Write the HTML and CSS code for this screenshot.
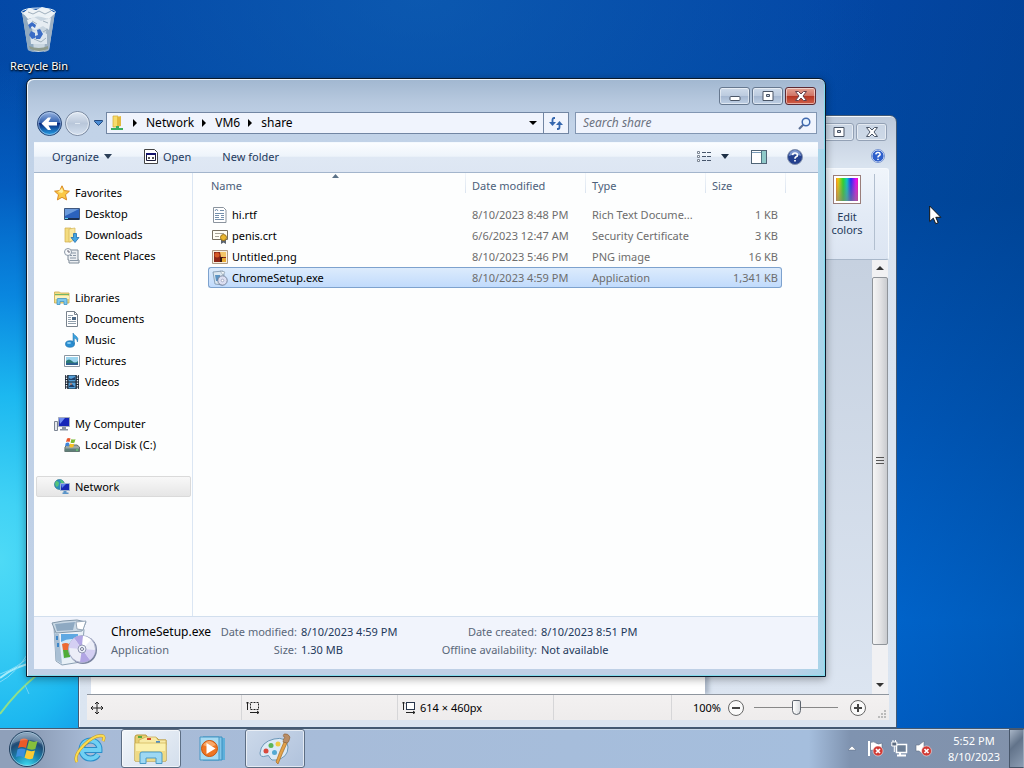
FILE: index.html
```html
<!DOCTYPE html>
<html lang="en">
<head>
    <meta charset="UTF-8">
    <meta name="viewport" content="width=device-width, initial-scale=1.0">
    <title>Desktop</title>
    <link rel="stylesheet" href="styles.css">
</head>
<body>
<main class="desktop">
    <svg class="wallpaper-lines" viewBox="0 0 80 120" aria-hidden="true">
        <path d="M0 106Q16 84 38 66" stroke="#8fe08a" stroke-width="2"/>
        <path d="M0 70Q14 58 40 53" stroke="#a5ecfb" stroke-width="2"/>
        <path d="M0 74Q16 66 30 42M0 66Q18 60 32 46" stroke="#7fdcf8"/>
        <path d="M25 77L29 86" stroke="#6fd4fa"/>
    </svg>

    <a href="#" class="desktop-icon">
        <svg width="40" height="48" viewBox="0 0 40 48" aria-hidden="true">
            <path d="M3 6L9 44Q19 48 30 44L36 6Z" fill="#c9d6e0"/>
            <path d="M3 6L9 44Q12 46 15 46L12 8Z" fill="#8fa9c0"/>
            <path d="M36 6L30 44Q27 46 25 46L29 8Z" fill="#9eb1c4"/>
            <path d="M4 7L10 2L17 4L23 1L30 3L36 7L30 13L19 10L9 13Z" fill="#eef3f6"/>
            <path d="M8 14L15 11L22 15L32 12L30 24L24 20L16 24L10 21Z" fill="#e6edf2"/>
            <path d="M11 27L18 24L28 28L28 38L12 38Z" fill="#dde6ee"/>
            <path d="M10 40Q20 44 29 40L29 43Q20 47 11 43Z" fill="#8e9a8c"/>
            <path d="M9 6L14 8L20 5L26 8L32 5M13 15L18 18M24 26L29 23M24 15L29 17M15 33L22 36L27 32" stroke="#9fb0bd" fill="none"/>
            <path d="M9 19l4-3 4 3-1 3-3-2-2 3zM18 24l3-1 3 5-3 5h-4l-1-3 3-1zM12 25l4 2 0 5-3 1-3-4z" fill="#3a6cc6"/>
            <ellipse cx="19.500" cy="6" rx="17" ry="4" fill="none" stroke="#e8f2f8" stroke-width="1"/>
        </svg>
        <span>Recycle Bin</span>
    </a>

    <section class="window paint">
        <div class="titlebar">
            <div class="window-buttons">
                <button aria-label="Minimize"><svg width="14" height="10"><rect x="1" y="5" width="12" height="4" rx="1" fill="#fff" stroke="#4a5566"/></svg></button>
                <button aria-label="Maximize"><svg width="14" height="10" viewBox="0 0 14 10"><path d="M2 .5h10v9H2z" fill="#fff" stroke="#4a5566"/><path d="M5.500 3.500h3v2h-3z" fill="#c8d3e2" stroke="#4a5566"/></svg></button>
                <button aria-label="Close"><svg width="14" height="10" viewBox="0 0 14 10"><path d="M1.500.5h3L7 3 9.500.5h3L9 5l3.500 4.500h-3L7 7 4.500 9.500h-3L5 5z" fill="#fff" stroke="#4a5566"/></svg></button>
            </div>
        </div>
        <div class="ribbon-tabs">
            <button class="icon-button" aria-label="Paint help">
                <svg width="14" height="14" viewBox="0 0 16 16"><circle cx="8" cy="8" r="7" fill="#2e5fcb" stroke="#fff"/><circle cx="8" cy="8" r="7.500" fill="none" stroke="#6f8fd0"/><path d="M5.500 6.200Q5.700 4 8 4t2.500 2Q10.500 7.300 8.800 8 8 8.500 8 9.700M8 11v1.600" fill="none" stroke="#fff" stroke-width="1.700"/></svg>
            </button>
        </div>
        <div class="ribbon">
            <button class="edit-colors">
                <span class="rainbow"></span>
                Edit<br>colors
            </button>
        </div>
        <div class="workspace">
            <div class="canvas-area"><div class="canvas"></div></div>
            <div class="scrollbar">
                <button aria-label="Scroll up"><svg width="8" height="5"><path d="M4 0L8 4H0Z" fill="#333"/></svg></button>
                <div class="track"><div class="thumb"><svg width="8" height="8"><path d="M0 .5h8M0 3.500h8M0 6.500h8" stroke="#555"/></svg></div></div>
                <button aria-label="Scroll down"><svg width="8" height="5"><path d="M0 0H8L4 4Z" fill="#333"/></svg></button>
            </div>
        </div>
        <footer class="paint-status">
            <div class="cell"><svg width="12" height="12" viewBox="0 0 12 12"><path d="M6 0v12M0 6h12M4 2l2-2 2 2M4 10l2 2 2-2M2 4L0 6l2 2M10 4l2 2-2 2" fill="none" stroke="#222"/></svg></div>
            <div class="cell"><svg width="14" height="13" viewBox="0 0 14 13"><rect x="4.500" y="1.500" width="8" height="7" fill="none" stroke="#222" stroke-dasharray="2 1"/><path d="M1.500 9V1M0 2.500L1.500 1 3 2.500M4 11.500h9M11 10l2 1.500-2 1.500" fill="none" stroke="#222"/></svg></div>
            <div class="cell"><svg width="14" height="13" viewBox="0 0 14 13"><rect x="4.500" y="1.500" width="8" height="7" fill="#fff" stroke="#29364c"/><path d="M1.500 9V1M0 2.500L1.500 1 3 2.500M4 11.500h9M11 10l2 1.500-2 1.500" fill="none" stroke="#222"/></svg>614 × 460px</div>
            <div class="cell"></div>
            <div class="zoom">
                <label for="zoom">100%</label>
                <button class="icon-button" aria-label="Zoom out"><svg width="16" height="16"><circle cx="8" cy="8" r="7.500" fill="#fafafa" stroke="#666"/><path d="M4 8h8" stroke="#444" stroke-width="2"/></svg></button>
                <input type="range" id="zoom" min="0" max="100" value="50">
                <button class="icon-button" aria-label="Zoom in"><svg width="16" height="16"><circle cx="8" cy="8" r="7.500" fill="#fafafa" stroke="#666"/><path d="M4 8h8M8 4v8" stroke="#444" stroke-width="2"/></svg></button>
                <svg class="grip" width="8" height="8"><path d="M6 0h2v2H6zM3 3h2v2H3zM6 3h2v2H6zM0 6h2v2H0zM3 6h2v2H3zM6 6h2v2H6z" fill="#bbb"/></svg>
            </div>
        </footer>
    </section>

    <section class="window explorer">
        <div class="titlebar">
            <div class="window-buttons">
                <button aria-label="Minimize"><svg width="14" height="10"><rect x="2" y="5.500" width="10" height="4" rx="1" fill="#fff" stroke="#4a5566"/></svg></button>
                <button aria-label="Maximize"><svg width="14" height="10" viewBox="0 0 14 10"><path d="M2 .5h10v9H2z" fill="#fff" stroke="#4a5566"/><path d="M5.500 3.500h3v2h-3z" fill="#c8d3e2" stroke="#4a5566"/></svg></button>
                <button class="close" aria-label="Close"><svg width="14" height="10" viewBox="0 0 14 10"><path d="M1.500.5h3L7 3 9.500.5h3L9 5l3.500 4.500h-3L7 7 4.500 9.500h-3L5 5z" fill="#fff" stroke="#66404a"/></svg></button>
            </div>
        </div>

        <div class="navbar">
            <button class="icon-button" aria-label="Back">
                <svg width="27" height="27" viewBox="0 0 27 27">
                    <defs><linearGradient id="back" x2="0" y2="1"><stop offset="0" stop-color="#9db8e4"/><stop offset=".48" stop-color="#2f5fae"/><stop offset=".5" stop-color="#08297e"/><stop offset="1" stop-color="#27a5ea"/></linearGradient></defs>
                    <circle cx="13.500" cy="13.500" r="12" fill="url(#back)" stroke="#2b4775"/><circle cx="13.500" cy="13.500" r="11" fill="none" stroke="#bcd5f2" stroke-opacity=".6"/>
                    <path d="M5.500 13.500L12 7.500h3L12.500 12H21v3.500h-8.500L15 20h-3z" fill="#fff"/>
                </svg>
            </button>
            <button class="icon-button forward" aria-label="Forward">
                <svg width="27" height="27" viewBox="0 0 27 27">
                    <defs><linearGradient id="fwd" x2="0" y2="1"><stop offset="0" stop-color="#e2eaf4"/><stop offset=".5" stop-color="#b9c7da"/><stop offset="1" stop-color="#d5e1f0"/></linearGradient></defs>
                    <circle cx="13.500" cy="13.500" r="12" fill="url(#fwd)" stroke="#76869e"/><circle cx="13.500" cy="13.500" r="11" fill="none" stroke="#f4f8fc" stroke-opacity=".7"/>
                    <path d="M11 13.500h5" stroke="#dfe8f2" stroke-width="1"/>
                </svg>
            </button>
            <button class="icon-button history" aria-label="Recent locations"><svg width="9" height="6"><path d="M.5.5h8v1L4.500 5.500.5 1.500z" fill="#4b8cd4" stroke="#234a80"/></svg></button>
            <nav class="address">
                <svg class="share-icon" width="16" height="16" viewBox="0 0 16 16"><path d="M4 1h5v11H4z" fill="#f7dc6c" stroke="#d3a934" stroke-width=".7"/><path d="M8 2l4-1v10l-4 1z" fill="#e3b93e"/><path d="M7 11h3v2h4v2H2v-2h5z" fill="#3cae62"/></svg>
                <svg class="crumb-arrow" width="5" height="8"><path d="M0 0L4 4 0 8Z"/></svg>
                <a href="#">Network</a>
                <svg class="crumb-arrow" width="5" height="8"><path d="M0 0L4 4 0 8Z"/></svg>
                <a href="#">VM6</a>
                <svg class="crumb-arrow" width="5" height="8"><path d="M0 0L4 4 0 8Z"/></svg>
                <a href="#">share</a>
                <button class="icon-button address-drop" aria-label="Previous locations"><svg width="8" height="4"><path d="M0 0H8L4 4Z"/></svg></button>
                <button class="refresh" aria-label="Refresh"><svg width="14" height="13" viewBox="0 0 14 13"><path d="M6 1H5Q3.500 1 3.500 3v3" fill="none" stroke="#3567ae" stroke-width="1.800"/><path d="M0 5h7L3.500 9z" fill="#3567ae"/><path d="M8 12h1q1.500 0 1.500-2V7" fill="none" stroke="#3567ae" stroke-width="1.800"/><path d="M7 8h7l-3.500-4z" fill="#3567ae"/></svg></button>
            </nav>
            <div class="search">
                <input type="text" placeholder="Search share" aria-label="Search share">
                <svg width="13" height="13" viewBox="0 0 13 13"><path d="M1 12L6 7" stroke="#5a6f94" stroke-width="2.200"/><circle cx="8" cy="5" r="3.800" fill="#e8f4ff" stroke="#3f68ae" stroke-width="1.500"/></svg>
            </div>
        </div>

        <div class="client">
            <div class="toolbar">
                <button class="organize">Organize <svg width="8" height="5"><path d="M0 0H8L4 5Z" fill="#2b3f57"/></svg></button>
                <button class="open"><svg width="14" height="15" viewBox="0 0 14 15"><path d="M.5.5h10l3 3v11H.5z" fill="#fff" stroke="#444"/><path d="M2.500 4.500h9v7h-9z" fill="#fff" stroke="#181838"/><path d="M2 4h10v2H2z" fill="#14146c"/><path d="M4 9h2M8 9h2M5 8v2M9 8v2" stroke="#222"/></svg>Open</button>
                <button>New folder</button>
                <span class="spacer"></span>
                <button class="icon-button" aria-label="Change your view"><svg width="16" height="13" viewBox="0 0 16 13"><path d="M1.500 1.500h2v2h-2zM1.500 5.500h2v2h-2zM1.500 9.500h2v2h-2z" fill="#fff" stroke="#7a8492"/><path d="M6 2.500h4M11 2.500h4M6 6.500h4M11 6.500h4M6 10.500h4M11 10.500h4" stroke="#47566b"/></svg></button>
                <button class="icon-button view-drop" aria-label="More views"><svg width="8" height="5"><path d="M0 0H8L4 5Z" fill="#1e2f45"/></svg></button>
                <button class="icon-button pane" aria-label="Show the preview pane"><svg width="16" height="14"><rect x=".5" y=".5" width="15" height="13" fill="#fff" stroke="#4f6476"/><path d="M1 2.500h10" stroke="#7a9cb8"/><rect x="10" y="1" width="5" height="12" fill="#8fc9c9"/><path d="M10.500 1v12" stroke="#4f7484"/></svg></button>
                <button class="icon-button" aria-label="Get help"><svg width="16" height="16" viewBox="0 0 16 16"><circle cx="8" cy="8" r="7.500" fill="#24408e" stroke="#8492ae"/><path d="M2 7a6 6 0 0 1 12 0q-6-3-12 0" fill="#7f98d0"/><path d="M5.500 6.200Q5.700 4 8 4t2.500 2Q10.500 7.300 8.800 8 8 8.500 8 9.700M8 11v1.600" fill="none" stroke="#fff" stroke-width="1.700"/></svg></button>
            </div>

            <div class="panes">
                <nav class="sidebar">
                    <ul>
                        <li><a href="#"><svg width="16" height="16" viewBox="0 0 16 16"><path d="M8 .8l2.200 4.800 5.200.6-3.900 3.500 1.100 5.200L8 12.300l-4.600 2.600 1.100-5.200L.6 6.200l5.200-.6z" fill="#fbc945" stroke="#d98a24"/><path d="M8 3l1.300 3.500L8 8 4 7z" fill="#fff0a0"/></svg>Favorites</a></li>
                        <li class="child"><a href="#"><svg width="16" height="16" viewBox="0 0 16 16"><path d="M.5 2.500h15v11H.5z" fill="#2b62bd" stroke="#40587e"/><path d="M1 3h14L1 10z" fill="#6c9bdc"/><path d="M1 12h14v2H1z" fill="#1b2f50"/><path d="M1 12.500h3" stroke="#5fd0e8"/></svg>Desktop</a></li>
                        <li class="child"><a href="#"><svg width="16" height="16" viewBox="0 0 16 16"><path d="M1 1h6v14H1z" fill="#f4dc80" stroke="#cfae4c" stroke-width=".7"/><path d="M5 2l6-1v12l-6 2z" fill="#fbe9a0" stroke="#d3b458" stroke-width=".7"/><path d="M9.500 6.500h3v4h2.500l-4 5-4-5h2.500z" fill="#44a5e2" stroke="#2270ae" stroke-width=".8"/></svg>Downloads</a></li>
                        <li class="child"><a href="#"><svg width="16" height="16" viewBox="0 0 16 16"><path d="M4 2h10v10h1v3H5v-3H4z" fill="#eceff2" stroke="#7f8b98"/><path d="M6 5h6M6 7.500h2M9 7.500h3M6 10h6M6 12.500h8" stroke="#8997a6"/><circle cx="4" cy="4" r="3.500" fill="#f8fafc" stroke="#8c99a7"/><path d="M4 2v2h2" fill="none" stroke="#667"/></svg>Recent Places</a></li>
                    </ul>
                    <ul>
                        <li><a href="#"><svg width="16" height="16" viewBox="0 0 16 16"><path d="M.5 2h5l1 1h8.500v10H.5z" fill="#f3df88" stroke="#c9a94c" stroke-width=".8"/><path d="M1 4.500h14" stroke="#73b56c"/><path d="M1 6h14v3H1z" fill="#fcf3bd"/><path d="M3 14.500V9.500q0-1 1-1h8q1 0 1 1v5h-3v-3H6v3z" fill="#7ec8ec" stroke="#3f93c4" stroke-width=".8"/></svg>Libraries</a></li>
                        <li class="child"><a href="#"><svg width="16" height="16" viewBox="0 0 16 16"><path d="M2.500.5h8l3 3v12h-11z" fill="#fff" stroke="#79838d"/><path d="M10.500.5v3h3" fill="none" stroke="#79838d"/><path d="M4 4.500h5M4 6.500h3M4 8.500h3M4 10.500h8M4 12.500h8" stroke="#91a0ad"/><path d="M8 6h4v3H8z" fill="#4c6885"/></svg>Documents</a></li>
                        <li class="child"><a href="#"><svg width="16" height="16" viewBox="0 0 16 16"><ellipse cx="6" cy="12" rx="4.500" ry="3.300" fill="#2a8ed2" stroke="#1a6ca8" stroke-width=".6"/><path d="M9 12V1q1 2 3 3 3 2 1.500 6 0-3-3.200-4V12z" fill="#3ca4e0" stroke="#1a6ca8" stroke-width=".5"/><ellipse cx="5" cy="11" rx="2" ry="1" fill="#8bd0f4"/></svg>Music</a></li>
                        <li class="child"><a href="#"><svg width="16" height="16" viewBox="0 0 16 16"><path d="M.5 2.500h15v11H.5z" fill="#fff" stroke="#8a96a2"/><path d="M2 4h12v8H2z" fill="#9bd4ee"/><path d="M2 8q3-3 6 0t6 0v4H2z" fill="#2d7b78"/><path d="M2 10h12v2H2z" fill="#2c5f8f"/></svg>Pictures</a></li>
                        <li class="child"><a href="#"><svg width="16" height="16" viewBox="0 0 16 16"><path d="M1 1h14v14H1z" fill="#1c2531"/><path d="M2.500 1v14M13.500 1v14" stroke="#e5ecf2" stroke-width="1.400" stroke-dasharray="1.500 1"/><path d="M4.500 1.500h7v6h-7zM4.500 8.500h7v6h-7z" fill="#549fd8"/><path d="M5 4l2 1 4-2v3H5zM5 12l3-2 3 3H5z" fill="#1f3f68"/><path d="M6 10h2" stroke="#e86e36"/></svg>Videos</a></li>
                    </ul>
                    <ul>
                        <li><a href="#"><svg width="16" height="16" viewBox="0 0 16 16"><path d="M.5 5.500h3v9h-3z" fill="#e6e9ee" stroke="#7b8492"/><path d="M4.500 1.500h11v9h-11z" fill="#1626b8" stroke="#a4adbd"/><path d="M5 2h6L6 8z" fill="#6f8cf2"/><path d="M8 11h4v2h2v1.500H6V13h2z" fill="#8b95a4"/></svg>My Computer</a></li>
                        <li class="child"><a href="#"><svg width="16" height="16" viewBox="0 0 16 16"><path d="M1 10l2-2h10l2.500 2v4.500H.8z" fill="#9eaaa8" stroke="#66726f"/><path d="M1 11.500h14.500v3H1z" fill="#5f7f78"/><path d="M3 1.500q2-1 3.500 0L5.500 5Q4 4 2 5z" fill="#e8552b"/><path d="M7.500 2q2 1 4 0l-1 3.500q-2 1-4 0z" fill="#7dbb32"/><path d="M1.800 6q2-1 3.500 0l-1 3.500Q3 8.500 1 9z" fill="#3b84dc"/><path d="M6.300 6.500q2 1 4 0l-1 3.500q-2 1-4 0z" fill="#f7c325"/><path d="M12 13h2" stroke="#6cf06c"/></svg>Local Disk (C:)</a></li>
                    </ul>
                    <ul>
                        <li class="current"><a href="#"><svg width="16" height="16" viewBox="0 0 16 16"><circle cx="5.500" cy="5.500" r="5" fill="#2c8fbd" stroke="#1f6c86" stroke-width=".6"/><path d="M2 2q3 0 3 2.500T2.500 8Q0 5 2 2M6 1q3 0 4 3L7 4z" fill="#55c47a"/><path d="M6.500 4.500h9v7h-9z" fill="#1828b4" stroke="#9fb2d0"/><path d="M7 5h5l-4 4z" fill="#5d83ec"/><path d="M9.500 12h3v1.500h2V15h-6v-1.500h1z" fill="#5a94c8"/></svg>Network</a></li>
                    </ul>
                </nav>

                <div class="files">
                    <table>
                        <thead>
                            <tr>
                                <th class="col-name">Name<svg class="sort" width="7" height="4"><path d="M0 4L3.500 0 7 4Z" fill="#5b7288"/></svg></th>
                                <th class="col-date">Date modified</th>
                                <th class="col-type">Type</th>
                                <th class="col-size">Size</th>
                            </tr>
                        </thead>
                        <tbody>
                            <tr>
                                <td><svg width="16" height="16" viewBox="0 0 16 16"><path d="M1.500.5h10l2.500 2.500v12.500H1.500z" fill="#fff" stroke="#8b949e"/><path d="M3 4l1.500-2L6 4M8 3.500h4M3 6.500h9M3 8.500h4M9 8.500h3M3 10.500h4M9 10.500h3M3 12.500h9" fill="none" stroke="#7590ac"/></svg>hi.rtf</td>
                                <td>8/10/2023 8:48 PM</td>
                                <td>Rich Text Docume...</td>
                                <td>1 KB</td>
                            </tr>
                            <tr>
                                <td><svg width="16" height="16" viewBox="0 0 16 16"><path d="M.5 2.500h15v9H.5z" fill="#fffdf4" stroke="#776f60"/><path d="M3 5.500h9M3 8.500h4" stroke="#a8a498"/><path d="M9 10h5v6l-2.500-1.500L9 16z" fill="#5c6570"/><circle cx="11.500" cy="9.500" r="3" fill="#ebb72e" stroke="#9c741a"/></svg>penis.crt</td>
                                <td>6/6/2023 12:47 AM</td>
                                <td>Security Certificate</td>
                                <td>3 KB</td>
                            </tr>
                            <tr>
                                <td><svg width="16" height="16" viewBox="0 0 16 16"><path d="M.5 1.500h15v13H.5z" fill="#f7efe0" stroke="#ad9a84"/><path d="M2 3h12v10H2z" fill="#8c2717"/><path d="M8 3h6v5H9z" fill="#f3c668"/><circle cx="5" cy="6" r="2.500" fill="#d55a27"/><path d="M8 8h3v5H8z" fill="#3a1a10"/><path d="M10 9h4v4h-4z" fill="#e8ab35"/></svg>Untitled.png</td>
                                <td>8/10/2023 5:46 PM</td>
                                <td>PNG image</td>
                                <td>16 KB</td>
                            </tr>
                            <tr class="selected">
                                <td><svg width="16" height="16" viewBox="0 0 16 16"><path d="M1 2l10-1 1 3-1 11-8-1z" fill="#dce8f2" stroke="#7790a8" stroke-width=".8"/><path d="M3 5h5v6H4z" fill="#5c94c4"/><path d="M8 1l5 1-2 3z" fill="#f4f8fb" stroke="#8595a6" stroke-width=".6"/><circle cx="10.500" cy="10.500" r="4.700" fill="#dcdff2" stroke="#64728c" stroke-width=".8"/><circle cx="10.500" cy="10.500" r="1.300" fill="#fff" stroke="#8088a8" stroke-width=".6"/></svg>ChromeSetup.exe</td>
                                <td>8/10/2023 4:59 PM</td>
                                <td>Application</td>
                                <td>1,341 KB</td>
                            </tr>
                        </tbody>
                    </table>
                </div>
            </div>

            <footer class="details">
                <svg width="48" height="48" viewBox="0 0 48 48" aria-hidden="true">
                    <path d="M4 8l28-2 2 5-3 32-19 3-6-4z" fill="#e8f0f7" stroke="#8ba0b3"/>
                    <path d="M2 4l11-2 14-1 9 2-4 9-26 2z" fill="#c9d8e5" stroke="#8297aa"/>
                    <path d="M5 5l20-2-2 8-16 1z" fill="#8ea9c2"/>
                    <path d="M26 3l10-1-3 9-6-1z" fill="#fff" stroke="#95a6b8"/>
                    <path d="M4 14l5 1 3 30-6-4z" fill="#a9bfd4"/>
                    <path d="M6 17h2v4H6zM7 24h2v4H7z" fill="#3d86c9"/>
                    <path d="M11 15h17v22l-15 3z" fill="#cde7f8"/>
                    <path d="M11 15h17v6q-9-3-17 2z" fill="#5ea8e2"/>
                    <path d="M12 25q4-2 7 0v6h-6z" fill="#ec6b32"/><path d="M13 31h7v7l-6 1z" fill="#4fac38"/><path d="M19 24h6v7h-6z" fill="#64b844"/>
                    <circle cx="33" cy="31" r="14" fill="#7a83a0"/><circle cx="32" cy="30" r="13.500" fill="#eceef8" stroke="#aab0ca"/>
                    <path d="M32 30L24 19Q28 16 33 17zM32 30L40 41Q35 44 30 43z" fill="#b1a5e4"/>
                    <path d="M32 30L19 29Q19 23 24 19zM32 30l13 1q0 6-5 10z" fill="#d4cff3"/>
                    <path d="M32 30L33 17q4 0 8 4z" fill="#fff"/>
                    <circle cx="32" cy="30" r="4" fill="#edf1f9" stroke="#9399b4"/><circle cx="32" cy="30" r="1.500" fill="#fff" stroke="#737a96"/>
                </svg>
                <div class="details-grid">
                    <span class="name">ChromeSetup.exe</span>
                    <span class="label">Date modified:</span><span>8/10/2023 4:59 PM</span>
                    <span class="label">Date created:</span><span>8/10/2023 8:51 PM</span>
                    <span class="kind">Application</span>
                    <span class="label">Size:</span><span>1.30 MB</span>
                    <span class="label">Offline availability:</span><span>Not available</span>
                </div>
            </footer>
        </div>
    </section>

    <svg class="cursor" width="13" height="20" viewBox="0 0 13 20" aria-hidden="true"><path d="M.7 1v15.500l3.600-3.300 2.400 5.500 2.500-1-2.400-5.400h5z" fill="#fff" stroke="#111"/></svg>
</main>

<footer class="taskbar">
    <button class="start" aria-label="Start">
        <svg width="38" height="38" viewBox="0 0 38 38">
            <defs><radialGradient id="orb" cx=".5" cy="1" r="1"><stop offset="0" stop-color="#3fe0f4"/><stop offset=".4" stop-color="#1b82ad"/><stop offset=".7" stop-color="#1f4a74"/><stop offset="1" stop-color="#8ba6c0"/></radialGradient></defs>
            <circle cx="19" cy="19" r="17.500" fill="url(#orb)" stroke="#21405f"/>
            <circle cx="19" cy="19" r="16.500" fill="none" stroke="#b8d9ea" stroke-opacity=".6"/>
            <path d="M12.500 9.500q4-2 7.500.5l-2 8q-4-2-8 0z" fill="#ea5a28"/>
            <path d="M21 10.500q4 2 8.500.5l-2.200 8q-4 1.500-8.300-.5z" fill="#86bf3c"/>
            <path d="M9.500 19.500q4-2 8 0l-2 8q-3.500-2-7.500-.5z" fill="#3c8ede"/>
            <path d="M18.700 20q4 2 8.300.5l-2.200 8q-4 1.700-8.300-.8z" fill="#fccb35"/>
            <path d="M4 14Q7 4 19 3.500T34 14Q19 6 4 14" fill="#fff" opacity=".2"/>
        </svg>
    </button>
    <div class="tasks">
        <button aria-label="Internet Explorer">
            <svg width="32" height="32" viewBox="0 0 32 32">
                <path d="M24 21.500A9 9 0 1 1 25.500 17H9.500" fill="none" stroke="#2b8dc9" stroke-width="6"/>
                <path d="M24 21.500A9 9 0 1 1 25.500 17H9.500" fill="none" stroke="#70d0f3" stroke-width="4"/>
                <path d="M3 29Q-1 23 10 12T29 3q2 1 0 5" fill="none" stroke="#c89a1c" stroke-width="3"/>
                <path d="M3 29Q-1 23 10 12T29 3q2 1 0 5" fill="none" stroke="#fbdc52" stroke-width="2"/>
            </svg>
        </button>
        <button class="running active" aria-label="Windows Explorer">
            <svg width="34" height="32" viewBox="0 0 34 32">
                <path d="M1 4q0-2 2-2h9l2 3h9l2 2h7v21H1z" fill="#e8cf72" stroke="#b99a3f"/>
                <path d="M12 4h10l2 3h8v5H5V7z" fill="#f7eaa6" stroke="#c6a84b" stroke-width=".7"/>
                <path d="M4 3h4v2H4z" fill="#58a83c"/><path d="M13 5h4v2h-4z" fill="#d5462c"/><path d="M22 8h4v2h-4z" fill="#4e8dc4"/>
                <path d="M1 10h31v18H1z" fill="#fbf0ac" stroke="#cfb253" stroke-width=".7"/>
                <path d="M2 18h29v9H2z" fill="#f0da83"/>
                <path d="M6 30.500V21q0-2 2-2h18q2 0 2 2v9.500h-6V25H12v5.500z" fill="#9dd8f3" stroke="#4a9ac7"/>
            </svg>
        </button>
        <button aria-label="Windows Media Player">
            <svg width="28" height="28" viewBox="0 0 28 28">
                <path d="M8 3h18v22H8z" fill="#5fb0db"/><path d="M4 2h19v23H4z" fill="#83c6e8" stroke="#3b8fc0"/><path d="M1 2h19v23H1z" fill="#a8dbf2" stroke="#4797c4"/>
                <circle cx="10.500" cy="13.500" r="8" fill="#ed7522" stroke="#c7540f"/><path d="M4 10q6-8 13 0-7 3-13 0" fill="#f8a868"/><path d="M7.500 8v11l9-5.500z" fill="#fff"/>
            </svg>
        </button>
        <button class="running" aria-label="Paint">
            <svg width="32" height="32" viewBox="0 0 32 32">
                <path d="M1 20Q2 9 15 6t14 8q0 11-12 13-5 1-6-2-1-4-4-2-6 2-6-3z" fill="#dceaf6" stroke="#6d98b8"/>
                <circle cx="7" cy="18" r="2.500" fill="#d9483c"/><circle cx="12" cy="12.500" r="2.500" fill="#5cb458"/><circle cx="19" cy="11" r="2.500" fill="#f1ca42"/><circle cx="15.500" cy="19.500" r="2.500" fill="#53a9d3"/>
                <path d="M17 29Q20 20 25 9l3 1Q23 21 19 31z" fill="#e3a24a" stroke="#a56c23" stroke-width=".7"/><path d="M24 9q0-3 2-5-3 0-1-3 4-1 6 3-1 6-3 6z" fill="#b98d65" stroke="#80562f" stroke-width=".5"/>
            </svg>
        </button>
    </div>
    <div class="tray">
        <button class="icon-button" aria-label="Show hidden icons"><svg width="8" height="5"><path d="M4 0L8 4H0Z" fill="#fff" stroke="#5b6b82" stroke-width=".5"/></svg></button>
        <button class="icon-button" aria-label="Action Center"><svg width="17" height="17" viewBox="0 0 17 17"><path d="M2 1v15" stroke="#fff" stroke-width="2"/><path d="M3.500 2.500Q7 1 9 3t6 0v8q-3 1-5-.5t-6.500 0z" fill="#fff" stroke="#5c6c80" stroke-width=".6"/><circle cx="11" cy="11" r="5" fill="#d13a34" stroke="#fff" stroke-width=".5"/><path d="M9 9l4 4M13 9l-4 4" stroke="#fff" stroke-width="1.700"/></svg></button>
        <button class="icon-button" aria-label="Network status"><svg width="17" height="17" viewBox="0 0 17 17"><path d="M5.500 4.500h10v8h-10z" fill="#6d7f96" stroke="#fff" stroke-width="1.500"/><path d="M9 13v2M6 15.500h9" stroke="#fff" stroke-width="2"/><path d="M.8 2h5v4h-5zM2 0v2M4.500 0v2M3.300 6v6" fill="#5c6c82" stroke="#fff"/></svg></button>
        <button class="icon-button" aria-label="Volume"><svg width="17" height="17" viewBox="0 0 17 17"><path d="M1 5h3l5-4v14l-5-4H1z" fill="#fff" stroke="#617084" stroke-width=".6"/><circle cx="11.500" cy="11" r="5" fill="#d13a34" stroke="#fff" stroke-width=".5"/><path d="M9.500 9l4 4M13.500 9l-4 4" stroke="#fff" stroke-width="1.700"/></svg></button>
        <div class="clock"><time>5:52 PM</time><time>8/10/2023</time></div>
    </div>
    <button class="show-desktop" aria-label="Show desktop"></button>
</footer>
</body>
</html>
```
FILE: styles.css
```css
* {
    box-sizing: border-box;
}

body {
    margin: 0;
    height: 100vh;
    display: flex;
    flex-direction: column;
    overflow: hidden;
    font-family: "Noto Sans", "Open Sans", sans-serif;
    font-size: 11px;
    line-height: 16px;
    color: #000;
}

a {
    color: inherit;
    text-decoration: none;
}

button, input {
    font: inherit;
    color: inherit;
    margin: 0;
}

button {
    padding: 0;
    border: none;
    background: none;
}

svg {
    display: block;
    flex: none;
}

.icon-button {
    display: flex;
    align-items: center;
    justify-content: center;
}

/* desktop */
.desktop {
    position: relative;
    flex: 1;
    overflow: hidden;
    background:
        radial-gradient(ellipse 320px 500px at 0 560px, #4edaf6 0%, #40d2f5 12%, #1cb8f0 33%, rgba(10, 140, 228, 0.9) 53%, rgba(5, 105, 210, 0.6) 75%, rgba(0, 80, 190, 0) 100%),
        radial-gradient(ellipse 460px 260px at 420px 0, rgba(20, 105, 185, 0.5), rgba(10, 90, 180, 0) 100%),
        linear-gradient(100deg, rgba(0, 50, 110, 0) 70%, rgba(0, 50, 110, 0.35) 100%),
        linear-gradient(#0347a6 0, #004aa4 200px, #005cc2 420px, #006fe0 620px, #0068d8 100%);
}

.wallpaper-lines {
    position: absolute;
    left: 0;
    bottom: 0;
    width: 80px;
    height: 120px;
    fill: none;
}

.desktop-icon {
    position: absolute;
    top: 6px;
    left: 0;
    width: 78px;
    display: flex;
    flex-direction: column;
    align-items: center;
    gap: 4px;
    color: #fff;
    text-shadow: 0 1px 2px #000, 1px 1px 2px #000;
}

.cursor {
    position: absolute;
    top: 205px;
    left: 929px;
}

/* windows */
.window {
    position: absolute;
    display: flex;
    flex-direction: column;
    border-radius: 7px 7px 0 0;
}

.titlebar {
    flex: none;
    display: flex;
    justify-content: flex-end;
    height: 32px;
}

.window-buttons {
    display: flex;
    gap: 2px;
}

.window-buttons button {
    display: flex;
    align-items: center;
    justify-content: center;
    width: 31px;
    height: 18px;
    border: 1px solid #66788f;
    border-radius: 3px;
    background: linear-gradient(#cfdbea, #bccbdf 48%, #a5b7d0 50%, #bfd0e5);
    box-shadow: inset 0 0 0 1px rgba(255, 255, 255, 0.5);
}

.window-buttons .close {
    border-color: #5c2a33;
    background: linear-gradient(#e3a394, #d17465 48%, #b53420 50%, #d0604a);
}

/* explorer */
.explorer {
    top: 78px;
    bottom: 51px;
    left: 26px;
    right: 198px;
    padding: 0 7px 7px;
    border: 1px solid #0b1a2b;
    box-shadow: inset 1px 1px 0 #f2f8fd, inset -1px -1px 0 #83dced, 0 2px 8px rgba(0, 0, 0, 0.35);
    background:
        linear-gradient(90deg, rgba(170, 225, 240, 0) 95%, rgba(150, 215, 235, 0.6)) 0 70px no-repeat,
        linear-gradient(#a1b7d0 0, #b6c8de 22px, #c2d3e8 45px, #bfd0e6 100%);
}

.explorer .titlebar {
    padding-top: 8px;
    padding-right: 2px;
}

.navbar {
    flex: none;
    display: flex;
    align-items: center;
    height: 24px;
    padding: 0 1px 0 2px;
    margin-bottom: 7px;
}

.forward {
    margin-left: 1px;
}

.history {
    width: 14px;
    height: 22px;
    margin-right: 1px;
}

.address {
    flex: 463 1 463px;
    display: flex;
    align-items: center;
    height: 22px;
    padding-left: 2px;
    font-size: 12px;
    border: 1px solid #7286a3;
    background: #f0f4fd;
}

.crumb-arrow {
    margin: 0 8px;
}

.address-drop {
    width: 20px;
    height: 20px;
    margin-left: auto;
}

.refresh {
    display: flex;
    align-items: center;
    justify-content: center;
    width: 25px;
    height: 20px;
    border-left: 1px solid #7286a3;
}

.search {
    flex: 242 1 242px;
    display: flex;
    align-items: center;
    height: 22px;
    margin-left: 6px;
    padding: 0 5px 0 7px;
    border: 1px solid #8296b2;
    background: #f0f4fd;
}

.search input {
    flex: 1;
    min-width: 0;
    padding: 0;
    border: none;
    outline: none;
    background: none;
    font-size: 12px;
}

.search input::placeholder {
    color: #6b7280;
    font-style: italic;
}

.client {
    flex: 1;
    min-height: 0;
    display: flex;
    flex-direction: column;
    background: #fdfefe;
}

.toolbar {
    flex: none;
    display: flex;
    align-items: center;
    height: 31px;
    padding: 0 15px 2px 18px;
    color: #23395c;
    border-top: 1px solid #f4f9fe;
    border-bottom: 1px solid #a3b5cc;
    background: linear-gradient(#fbfdff, #eef4fb 45%, #dfe8f4 50%, #dde6f3);
}

.organize, .open {
    display: flex;
    align-items: center;
    gap: 5px;
}

.open {
    margin: 0 31px 0 32px;
}

.spacer {
    flex: 1;
}

.view-drop {
    width: 26px;
    height: 20px;
}

.pane {
    margin: 0 20px 0 13px;
}

.panes {
    flex: 1;
    min-height: 0;
    display: flex;
}

.sidebar {
    flex: none;
    width: 159px;
    padding: 9px 1px 0 2px;
    border-right: 1px solid #dbe6f3;
}

.sidebar ul {
    margin: 0 0 21px;
    padding: 0;
    list-style: none;
}

.sidebar a {
    display: flex;
    align-items: center;
    gap: 5px;
    height: 21px;
    padding-left: 17px;
    border: 1px solid transparent;
    border-radius: 2px;
}

.sidebar .child a {
    padding-left: 27px;
}

.sidebar .current a {
    border-color: #dadada;
    background: linear-gradient(#f8f8f8, #e6e6e6);
}

.files {
    flex: 1;
    padding-left: 15px;
    overflow: hidden;
}

table {
    border-spacing: 0;
    table-layout: fixed;
    width: 574px;
}

th {
    position: relative;
    height: 31px;
    padding: 5px 0 0 6px;
    vertical-align: top;
    text-align: left;
    font-weight: normal;
    color: #4c607a;
}

/* column separators */
th::after {
    content: "";
    position: absolute;
    top: 0;
    right: 0;
    width: 1px;
    height: 20px;
    background: linear-gradient(#f1f5fa, #dbe4ef);
}

.col-name {
    width: 258px;
    padding-left: 3px;
}

.col-date, .col-type {
    width: 120px;
}

.col-size::after {
    right: -4px;
}

.sort {
    position: absolute;
    top: 1px;
    left: 124px;
}

td {
    height: 21px;
    padding: 0 0 0 6px;
    color: #6d6d6d;
    border: 1px solid transparent;
    border-width: 1px 0;
    white-space: nowrap;
}

td:first-child {
    padding-left: 4px;
    color: #000;
}

td:first-child svg {
    display: inline-block;
    vertical-align: top;
    margin-right: 4px;
}

td:last-child {
    padding-right: 4px;
    text-align: right;
}

.selected td {
    border-color: #7da2ce;
    background: linear-gradient(#dcebfc, #c1dbfc);
}

.selected td:first-child {
    padding-left: 3px;
    border-left-width: 1px;
    border-radius: 3px 0 0 3px;
}

.selected td:last-child {
    border-right-width: 1px;
    border-radius: 0 3px 3px 0;
    padding-right: 3px;
}

.details {
    flex: none;
    display: flex;
    align-items: flex-start;
    gap: 13px;
    height: 53px;
    padding: 2px 0 0 16px;
    color: #1e395b;
    border-top: 1px solid #d2dfee;
    background: #f1f4fc;
}

.details-grid {
    flex: 1;
    display: grid;
    grid-template-columns: 102px 80px 130px 102px 1fr;
    column-gap: 4px;
    padding-top: 4px;
    line-height: 18px;
    white-space: nowrap;
}

.details .name {
    font-size: 12px;
    color: #000;
}

.details .label {
    text-align: right;
}

.details .label, .details .kind {
    color: #5a6779;
}

/* paint */
.paint {
    top: 115px;
    bottom: 0;
    left: 78px;
    right: 127px;
    padding: 0 7px 7px 8px;
    border: 1px solid #435a75;
    box-shadow: inset 1px 1px 0 #f5f9fd;
    background: linear-gradient(#bcc8d9, #d9e3ef 50px, #dbe5f1);
}

.paint .titlebar {
    padding-top: 7px;
    padding-right: 2px;
}

.paint .window-buttons button {
    border-color: #93a1b5;
    background: rgba(210, 221, 235, 0.5);
}

.ribbon-tabs {
    flex: none;
    display: flex;
    justify-content: flex-end;
    height: 20px;
    padding-right: 4px;
}

.ribbon-tabs .icon-button {
    height: 16px;
}

.ribbon {
    flex: none;
    display: flex;
    justify-content: flex-end;
    height: 92px;
    padding: 5px 13px 9px 0;
    border: 1px solid #f5f9fd;
    border-bottom-color: #a8b7c9;
    border-radius: 3px;
    background: linear-gradient(#f0f5fb, #e3ebf6 50%, #dce5f2);
}

.edit-colors {
    display: flex;
    flex-direction: column;
    align-items: center;
    width: 55px;
    line-height: 13px;
    color: #263c5c;
    border-right: 1px solid #b2bfcf;
}

.rainbow {
    width: 28px;
    height: 29px;
    margin: 1px 0 6px;
    border: 1px solid #9a7e7a;
    background:
        linear-gradient(rgba(128, 128, 128, 0), rgba(128, 128, 128, 0.7)),
        linear-gradient(90deg, #f43 0, #fc0 15%, #2d2 35%, #0cc 50%, #22f 65%, #e0f 85%, #f06 100%);
    box-shadow: inset 0 0 0 2px #fff;
}

.workspace {
    flex: 1;
    min-height: 0;
    display: flex;
    padding-right: 1px;
}

.canvas-area {
    flex: 1;
    padding: 5px 0 0 4px;
    background: linear-gradient(#c6d1e0, #dce5f1);
}

.canvas {
    width: 614px;
    height: 100%;
    background: #fff;
    box-shadow: 4px 0 4px #aab6c6;
}

.scrollbar {
    display: flex;
    flex-direction: column;
    width: 16px;
    background: #f1f1f3;
}

.scrollbar button {
    display: flex;
    align-items: center;
    justify-content: center;
    height: 17px;
}

.track {
    flex: 1;
}

.thumb {
    display: flex;
    align-items: center;
    justify-content: center;
    height: 92%;
    border: 1px solid #8f949a;
    border-radius: 2px;
    background: linear-gradient(90deg, #f5f5f5, #e4e4e6 50%, #c9cbcf);
}

.paint-status {
    flex: none;
    display: grid;
    grid-template-columns: 155px 156px 156px 118px 1fr;
    height: 26px;
    border-top: 1px solid #8e959e;
    background: linear-gradient(#f3f1f1, #eeecec);
}

.cell {
    display: flex;
    align-items: center;
    gap: 4px;
    padding-left: 4px;
    border-right: 1px solid #d6d6d8;
}

.zoom {
    display: flex;
    align-items: center;
    justify-content: flex-end;
    gap: 7px;
}

.zoom input {
    appearance: none;
    width: 84px;
    height: 20px;
    margin: 0 5px 0 3px;
    background: linear-gradient(#888, #888) center / 100% 1px no-repeat;
}

.zoom input::-webkit-slider-thumb {
    appearance: none;
    width: 9px;
    height: 15px;
    border: 1px solid #5d646d;
    border-radius: 2px 2px 5px 5px;
    background: linear-gradient(90deg, #fff, #d9dce0);
}

.grip {
    align-self: flex-end;
    margin: 0 3px 2px 5px;
}

/* taskbar */
.taskbar {
    position: relative;
    flex: none;
    display: flex;
    height: 40px;
    border-top: 1px solid #46596f;
    box-shadow: inset 0 1px 0 #c6d7e9;
    background: linear-gradient(90deg, #8fa0ba 0, #8fa0ba 40px, #a8bbd7 90px, #a5bedd 79%, #7f93b0 83%, #8292ab 100%);
}

.start {
    width: 54px;
    padding-left: 8px;
}

.tasks {
    flex: 1;
    display: flex;
}

.tasks button {
    display: flex;
    align-items: center;
    justify-content: center;
    width: 60px;
    height: 39px;
    margin-right: 2px;
}

.tasks button:first-child {
    width: 65px;
    padding-left: 6px;
}

.tasks .running {
    border: 1px solid #5d6e84;
    border-radius: 3px;
    background: linear-gradient(135deg, #ccd9ea, #b0c2dc);
    box-shadow: inset 0 0 0 1px rgba(255, 255, 255, 0.6);
}

.tasks .active {
    background: linear-gradient(135deg, #f2f6fa, #d3deec);
}

.tray {
    display: flex;
    align-items: center;
    gap: 7px;
    color: #fff;
}

.tray .icon-button:first-child {
    margin-right: 4px;
}

.clock {
    display: flex;
    flex-direction: column;
    align-items: center;
    width: 70px;
}

.show-desktop {
    width: 15px;
    border: 1px solid #47566a;
    border-right-color: #9aa9bb;
    background: linear-gradient(135deg, #a8b5c6, #62738a 40%, #8c9db3);
}
```
